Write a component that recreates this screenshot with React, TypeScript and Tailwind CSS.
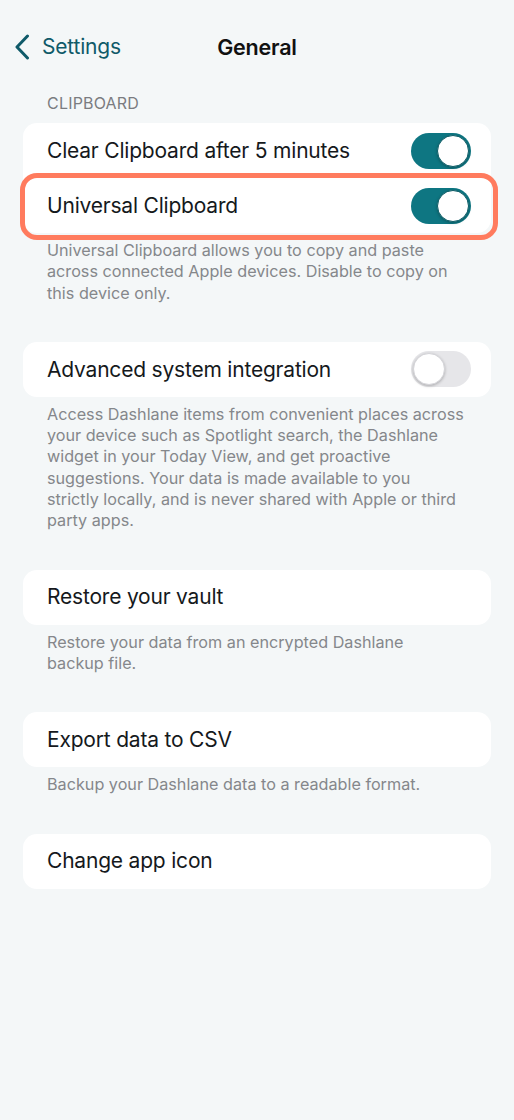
import React from 'react';

function Toggle({ on }: { on: boolean }) {
  return (
    <div
      className={`relative h-[36px] w-[60px] shrink-0 rounded-full ${
        on ? 'bg-[#0e7682]' : 'bg-[#e6e6e9]'
      }`}
    >
      <div
        className={`absolute top-[2px] h-[32px] w-[32px] rounded-full bg-white shadow-[0_1px_3px_rgba(0,0,0,0.25)] ${
          on ? 'right-[2px] border border-[#0b5c66]' : 'left-[2px] border border-[#d4d4d8]'
        }`}
      />
    </div>
  );
}

function Row({ label, toggle }: { label: string; toggle?: boolean }) {
  return (
    <div className="flex h-[55px] items-center justify-between pl-[24px] pr-[20px]">
      <span className="text-[21px] tracking-[-0.2px] text-[#15191c]">{label}</span>
      {toggle !== undefined && <Toggle on={toggle} />}
    </div>
  );
}

function Footnote({ lines }: { lines: string[] }) {
  return (
    <p className="pl-[47px] pt-[7px] text-[16.2px] leading-[21.3px] text-[#85878b]">
      {lines.map((l, i) => (
        <span key={i} className="block whitespace-nowrap">
          {l}
        </span>
      ))}
    </p>
  );
}

export default function App() {
  return (
    <div
      className="min-h-[1120px] w-full bg-[#f4f7f8]"
      style={{ fontFamily: 'Inter, "Noto Sans", sans-serif' }}
    >
      {/* nav bar */}
      <div className="relative flex h-[93px] items-start justify-center pt-[31px]">
        <div className="absolute left-[14px] top-[31px] flex items-center gap-[12px]">
          <svg width="16" height="26" viewBox="0 0 16 26" fill="none">
            <path
              d="M13.5 2 L3 13 L13.5 24"
              stroke="#0f5a69"
              strokeWidth="3"
              strokeLinecap="round"
              strokeLinejoin="round"
            />
          </svg>
          <span className="text-[21px] tracking-[-0.2px] text-[#0f5a69]">Settings</span>
        </div>
        <span className="text-[21.5px] font-semibold tracking-[-0.2px] text-[#111]">General</span>
      </div>

      <div className="pl-[47px] text-[16px] leading-[20px] tracking-[0.2px] text-[#7b7c80]">CLIPBOARD</div>

      <div className="mx-[23px] mt-[10px] rounded-[14px] bg-white">
        <Row label="Clear Clipboard after 5 minutes" toggle={true} />
        <div className="relative">
          <Row label="Universal Clipboard" toggle={true} />
          <div className="pointer-events-none absolute -bottom-[7px] -left-[3px] -right-[7px] -top-[5px] rounded-[17px] border-[5px] border-[#ff7b5e]" />
        </div>
      </div>
      <Footnote
        lines={[
          'Universal Clipboard allows you to copy and paste',
          'across connected Apple devices. Disable to copy on',
          'this device only.',
        ]}
      />

      <div className="mx-[23px] mt-[38px] rounded-[14px] bg-white">
        <Row label="Advanced system integration" toggle={false} />
      </div>
      <Footnote
        lines={[
          'Access Dashlane items from convenient places across',
          'your device such as Spotlight search, the Dashlane',
          'widget in your Today View, and get proactive',
          'suggestions. Your data is made available to you',
          'strictly locally, and is never shared with Apple or third',
          'party apps.',
        ]}
      />

      <div className="mx-[23px] mt-[38px] rounded-[14px] bg-white">
        <Row label="Restore your vault" />
      </div>
      <Footnote lines={['Restore your data from an encrypted Dashlane', 'backup file.']} />

      <div className="mx-[23px] mt-[38px] rounded-[14px] bg-white">
        <Row label="Export data to CSV" />
      </div>
      <Footnote lines={['Backup your Dashlane data to a readable format.']} />

      <div className="mx-[23px] mt-[38px] rounded-[14px] bg-white">
        <Row label="Change app icon" />
      </div>
    </div>
  );
}
